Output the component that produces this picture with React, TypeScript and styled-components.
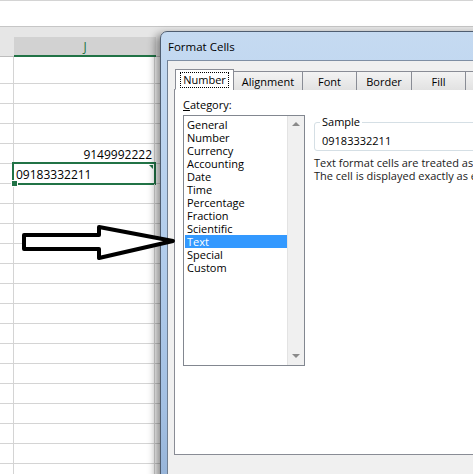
import React from "react";
import styled, { createGlobalStyle } from "styled-components";

const GlobalStyle = createGlobalStyle`
  html, body { margin: 0; padding: 0; background: #fff; }
  body { font-family: "Open Sans", "Noto Sans", sans-serif; }
`;

const UI_FONT = `"Open Sans", "Noto Sans", sans-serif`;

const CATEGORIES = [
  "General",
  "Number",
  "Currency",
  "Accounting",
  "Date",
  "Time",
  "Percentage",
  "Fraction",
  "Scientific",
  "Text",
  "Special",
  "Custom",
];

const TABS = [
  { label: "Number", width: 59 },
  { label: "Alignment", width: 70 },
  { label: "Font", width: 55 },
  { label: "Border", width: 56 },
  { label: "Fill", width: 55 },
  { label: "Protection", width: 70 },
];

const App = () => {
  const rows = Array.from({ length: 20 }, (_, i) => i);

  return (
    <>
      <GlobalStyle />
      <Screen>
        <Sheet>
          <TopStrip />
          <Band />
          <HeaderRow>
            <HeaderCorner />
            <ColumnHeader active>J</ColumnHeader>
            <HeaderRest />
          </HeaderRow>
          <Row tall>
            <SideCell />
            <Cell />
            <RestCell />
          </Row>
          {rows.map((i) => (
            <Row key={i}>
              <SideCell />
              {i === 3 ? (
                <Cell align="right">9149992222</Cell>
              ) : i === 4 ? (
                <Cell selected>
                  09183332211
                  <ErrorMark />
                  <FillHandle />
                </Cell>
              ) : (
                <Cell />
              )}
              <RestCell />
            </Row>
          ))}
        </Sheet>

        <Dialog>
          <TitleBar>Format Cells</TitleBar>
          <Client>
            <TabRow>
              {TABS.map((t, i) => (
                <Tab key={t.label} $w={t.width} $active={i === 0}>
                  {i === 0 ? <Focus>{t.label}</Focus> : t.label}
                </Tab>
              ))}
            </TabRow>
            <Panel>
              <LeftCol>
                <Label>
                  <u>C</u>ategory:
                </Label>
                <ListBox>
                  <Items>
                    {CATEGORIES.map((c) => (
                      <Item key={c} $selected={c === "Text"}>
                        {c}
                      </Item>
                    ))}
                  </Items>
                  <ScrollBar>
                    <ArrowUp />
                    <ArrowDown />
                  </ScrollBar>
                </ListBox>
              </LeftCol>
              <RightCol>
                <SampleBox>
                  <Legend>Sample</Legend>
                  <SampleValue>09183332211</SampleValue>
                </SampleBox>
                <Description>
                  Text format cells are treated as text even when a number is in the cell.
                  <br />
                  The cell is displayed exactly as entered.
                </Description>
              </RightCol>
            </Panel>
          </Client>
        </Dialog>

        <Arrow viewBox="0 0 473 474" width="473" height="474">
          <polygon
            points="24,235 99,235 99,227 173,241 99,258 99,249 24,249"
            fill="#fff"
            stroke="#000"
            strokeWidth="4"
            strokeLinejoin="round"
          />
        </Arrow>
      </Screen>
    </>
  );
};

export default App;

const Screen = styled.div`
  position: relative;
  width: 473px;
  height: 474px;
  overflow: hidden;
  background: #fff;
`;

/* ---------- spreadsheet ---------- */

const Sheet = styled.div`
  display: flex;
  flex-direction: column;
  font-family: "Open Sans", "Noto Sans", sans-serif;
  font-size: 12px;
  color: #000;
`;

const TopStrip = styled.div`
  height: 25px;
  border-top: 1px solid #d4d4d4;
  border-bottom: 1px solid #c6c6c6;
  background: #fff;
`;

const Band = styled.div`
  height: 10px;
  background: #e6e6e6;
`;

const HeaderRow = styled.div`
  display: flex;
  height: 20px;
  background: #e6e6e6;
`;

const HeaderCorner = styled.div`
  width: 14px;
  border-bottom: 1px solid #bdbdbd;
  box-sizing: border-box;
`;

const ColumnHeader = styled.div<{ active?: boolean }>`
  width: 142px;
  box-sizing: border-box;
  display: flex;
  align-items: center;
  justify-content: center;
  background: ${(p) => (p.active ? "#d2d2d2" : "#e6e6e6")};
  border-bottom: 2px solid ${(p) => (p.active ? "#217346" : "#bdbdbd")};
  color: ${(p) => (p.active ? "#217346" : "#444")};
  font-size: 12px;
`;

const HeaderRest = styled.div`
  flex: 1;
  border-bottom: 1px solid #bdbdbd;
`;

const Row = styled.div<{ tall?: boolean }>`
  display: flex;
  flex: none;
  height: ${(p) => (p.tall ? 27 : 20)}px;
  border-bottom: 1px solid #d4d4d4;
  box-sizing: border-box;
`;

const SideCell = styled.div`
  width: 13px;
  border-right: 1px solid #d4d4d4;
`;

const Cell = styled.div<{ align?: "left" | "right"; selected?: boolean }>`
  position: relative;
  width: 141px;
  border-right: 1px solid #d4d4d4;
  display: flex;
  align-items: flex-end;
  justify-content: ${(p) => (p.align === "right" ? "flex-end" : "flex-start")};
  padding: 0 2px 0 2px;
  box-sizing: border-box;
  line-height: 17px;

  ${(p) =>
    p.selected &&
    `
    &::after {
      content: "";
      position: absolute;
      inset: -2px -2px -2px -2px;
      border: 2px solid #217346;
      pointer-events: none;
    }
  `}
`;

const ErrorMark = styled.span`
  position: absolute;
  top: 1px;
  right: 1px;
  width: 0;
  height: 0;
  border-top: 4px solid #217346;
  border-left: 4px solid transparent;
`;

const FillHandle = styled.span`
  position: absolute;
  left: -3px;
  bottom: -4px;
  width: 5px;
  height: 5px;
  background: #217346;
  border: 1px solid #fff;
  z-index: 1;
`;

const RestCell = styled.div`
  flex: 1;
`;

/* ---------- dialog ---------- */

const Dialog = styled.div`
  position: absolute;
  left: 160px;
  top: 31px;
  width: 340px;
  height: 470px;
  box-sizing: border-box;
  border: 1px solid #4f5d70;
  border-radius: 7px 7px 0 0;
  background: linear-gradient(180deg, #c5daf1 0%, #b2cdec 45%, #a3c0e3 80%, #93b1d6 100%);
  box-shadow: -4px 3px 9px rgba(0, 0, 0, 0.45);
  padding-left: 6px;
  display: flex;
  flex-direction: column;
  font-family: ${UI_FONT};
  font-size: 11px;
  color: #000;
`;

const TitleBar = styled.div`
  height: 28px;
  display: flex;
  align-items: center;
  padding-left: 1px;
  font-size: 11.5px;
  color: #000;
`;

const Client = styled.div`
  flex: 1;
  background: #f0f0f0;
  border-top: 1px solid #7f8fa4;
  border-left: 1px solid #6f7f93;
  padding: 8px 0 0 6px;
  display: flex;
  flex-direction: column;
`;

const TabRow = styled.div`
  display: flex;
  align-items: flex-end;
  height: 21px;
  margin: 0 0 -1px 1px;
  position: relative;
  z-index: 1;
`;

const Tab = styled.div<{ $w: number; $active?: boolean }>`
  flex: none;
  width: ${(p) => p.$w}px;
  height: ${(p) => (p.$active ? 21 : 19)}px;
  box-sizing: border-box;
  margin-left: -1px;
  display: flex;
  align-items: center;
  justify-content: center;
  border: 1px solid #898c95;
  border-bottom: ${(p) => (p.$active ? "1px solid #fff" : "none")};
  background: ${(p) => (p.$active ? "#fff" : "linear-gradient(180deg, #f3f3f3, #e2e2e2)")};
  &:first-child {
    margin-left: 0;
  }
`;

const Focus = styled.span`
  outline: 1px dotted #000;
  outline-offset: 0;
  padding: 0 2px;
  line-height: 14px;
`;

const Panel = styled.div`
  height: 366px;
  box-sizing: border-box;
  border: 1px solid #898c95;
  background: #fff;
  padding: 8px 0 0 8px;
  display: flex;
  gap: 9px;
`;

const LeftCol = styled.div`
  flex: none;
  width: 122px;
  display: flex;
  flex-direction: column;
`;

const Label = styled.div`
  height: 14px;
  line-height: 14px;
  margin-bottom: 3px;
`;

const ListBox = styled.div`
  height: 251px;
  box-sizing: border-box;
  border: 1px solid #828790;
  display: flex;
`;

const Items = styled.div`
  flex: 1;
  padding: 2px 0 0 1px;
`;

const Item = styled.div<{ $selected?: boolean }>`
  height: 13px;
  line-height: 13px;
  padding-left: 2px;
  background: ${(p) => (p.$selected ? "#3399ff" : "transparent")};
  color: ${(p) => (p.$selected ? "#fff" : "#000")};
`;

const ScrollBar = styled.div`
  flex: none;
  width: 17px;
  box-sizing: border-box;
  background: #f0f0f0;
  border-left: 1px solid #e3e3e3;
  display: flex;
  flex-direction: column;
  justify-content: space-between;
  align-items: center;
  padding: 6px 0 7px;
`;

const ArrowUp = styled.span`
  width: 0;
  height: 0;
  border-left: 4px solid transparent;
  border-right: 4px solid transparent;
  border-bottom: 4px solid #8a8a8a;
`;

const ArrowDown = styled.span`
  width: 0;
  height: 0;
  border-left: 4px solid transparent;
  border-right: 4px solid transparent;
  border-top: 4px solid #8a8a8a;
`;

const RightCol = styled.div`
  flex: 1;
  min-width: 0;
  padding-top: 17px;
  display: flex;
  flex-direction: column;
  white-space: nowrap;
`;

const SampleBox = styled.fieldset`
  margin: 0;
  padding: 5px 7px 2px 7px;
  border: 1px solid #d5dfe5;
  border-radius: 3px;
`;

const Legend = styled.legend`
  margin-left: -2px;
  padding: 0 2px;
  line-height: 14px;
`;

const SampleValue = styled.div`
  line-height: 14px;
`;

const Description = styled.div`
  margin-top: 5px;
  line-height: 13px;
  color: #1a1a1a;
`;

/* ---------- annotation arrow ---------- */

const Arrow = styled.svg`
  position: absolute;
  left: 0;
  top: 0;
  z-index: 5;
  pointer-events: none;
`;
